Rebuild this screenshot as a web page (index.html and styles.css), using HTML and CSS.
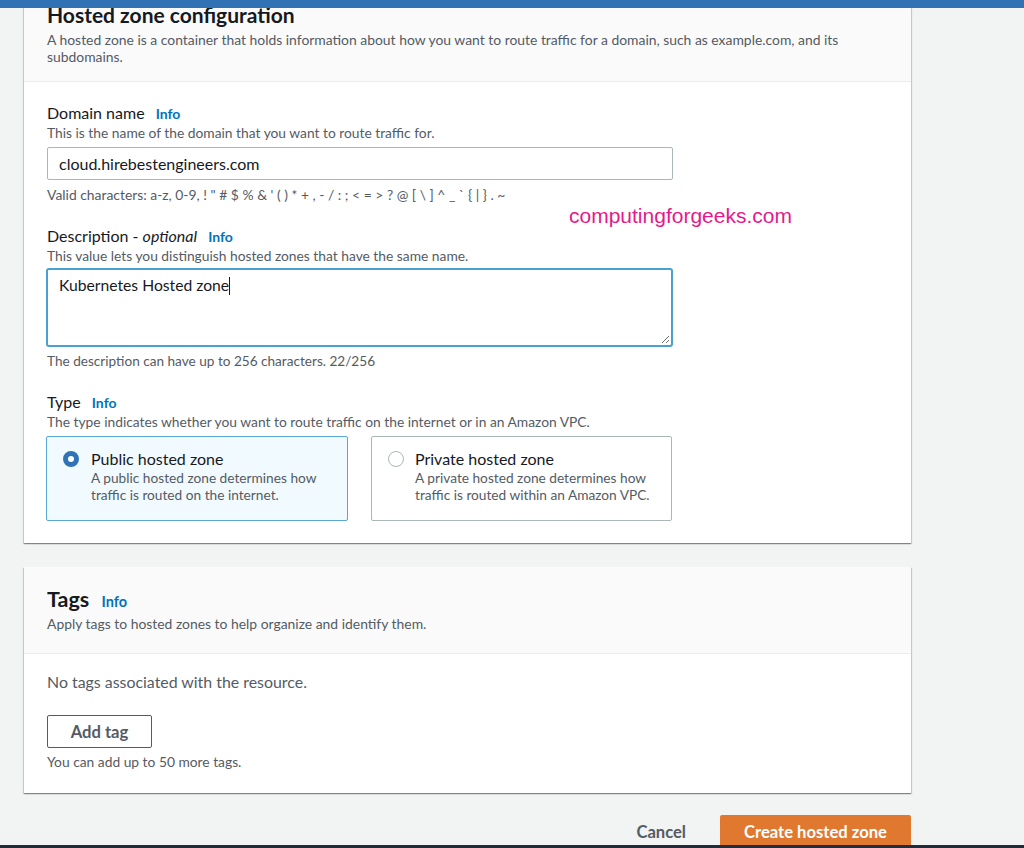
FILE: index.html
```html
<!DOCTYPE html>
<html>
<head>
<meta charset="utf-8">
<link rel="stylesheet" href="styles.css">
</head>
<body>
<div class="topbar"></div>
<main class="page">
  <section class="card">
    <header class="card-head">
      <h2 class="title">Hosted zone configuration</h2>
      <p class="head-desc">A hosted zone is a container that holds information about how you want to route traffic for a domain, such as example.com, and its subdomains.</p>
    </header>
    <div class="card-body">
      <div class="field">
        <div class="label">Domain name <a class="info">Info</a></div>
        <div class="hint">This is the name of the domain that you want to route traffic for.</div>
        <div class="input">cloud.hirebestengineers.com</div>
        <div class="constraint">Valid characters: a-z, 0-9, ! " # $ % &amp; ' ( ) * + , - / : ; &lt; = &gt; ? @ [ \ ] ^ _ ` { | } . ~</div>
      </div>
      <div class="watermark">computingforgeeks.com</div>
      <div class="field field-desc">
        <div class="label">Description - <i>optional</i> <a class="info">Info</a></div>
        <div class="hint">This value lets you distinguish hosted zones that have the same name.</div>
        <div class="textarea"><span class="ta-text">Kubernetes Hosted zone</span><span class="caret"></span>
          <svg class="grip" width="9" height="9" viewBox="0 0 9 9"><path d="M8 1L1 8M8 5L5 8" stroke="#687078" stroke-width="1"/></svg>
        </div>
        <div class="constraint constraint-count">The description can have up to 256 characters. 22/256</div>
      </div>
      <div class="field field-type">
        <div class="label">Type <a class="info">Info</a></div>
        <div class="hint">The type indicates whether you want to route traffic on the internet or in an Amazon VPC.</div>
        <div class="tiles">
          <div class="tile tile-on">
            <span class="radio radio-on"></span>
            <div>
              <div class="tile-title">Public hosted zone</div>
              <div class="tile-desc">A public hosted zone determines how traffic is routed on the internet.</div>
            </div>
          </div>
          <div class="tile tile-off">
            <span class="radio"></span>
            <div>
              <div class="tile-title">Private hosted zone</div>
              <div class="tile-desc">A private hosted zone determines how traffic is routed within an Amazon VPC.</div>
            </div>
          </div>
        </div>
      </div>
    </div>
  </section>

  <section class="card card-tags">
    <header class="card-head tags-head">
      <h2 class="title-tags">Tags <a class="info info-lg">Info</a></h2>
      <p class="head-desc">Apply tags to hosted zones to help organize and identify them.</p>
    </header>
    <div class="card-body tags-body">
      <div class="empty">No tags associated with the resource.</div>
      <button class="btn">Add tag</button>
      <div class="tags-note">You can add up to 50 more tags.</div>
    </div>
  </section>

  <div class="actions">
    <a class="cancel">Cancel</a>
    <button class="primary">Create hosted zone</button>
  </div>
</main>
<div class="bottombar"></div>
</body>
</html>
```

FILE: styles.css
```css
* { box-sizing: border-box; }
html, body { margin: 0; padding: 0; }
body {
  width: 1024px;
  height: 848px;
  overflow: hidden;
  background: #f2f3f3;
  font-family: Lato, "Liberation Sans", sans-serif;
  color: #16191f;
  position: relative;
}
.topbar { height: 8px; background: #3072b4; position: relative; z-index: 2; }
.page { padding-left: 24px; width: 911px; }
.card {
  background: #fff;
  box-shadow: 0 1px 1px 0 rgba(0,28,36,.3), 1px 1px 1px 0 rgba(0,28,36,.15), -1px 1px 1px 0 rgba(0,28,36,.15);
  position: relative;
}
.card-head {
  background: #fafafa;
  border-bottom: 1px solid #eaeded;
  padding: 0 23px;
  height: 78px;
}
.title {
  margin: -4px 0 0 0;
  font-size: 21px;
  line-height: 22px;
  font-weight: 700;
}
.head-desc {
  margin: 5px 0 0 0;
  font-size: 13.9px;
  line-height: 17px;
  color: #545b64;
  max-width: 810px;
}
.card-body { padding: 21px 23px 22px 23px; position: relative; }
.label { font-size: 16px; line-height: 20px; }
.label i { font-style: italic; }
.info { color: #0073bb; font-weight: 700; font-size: 14px; margin-left: 7px; }
.hint { font-size: 13.8px; line-height: 18px; color: #545b64; }
.input {
  margin-top: 5px;
  width: 626px;
  height: 33px;
  border: 1px solid #aab7b8;
  border-radius: 2px;
  padding: 0 11px;
  font-size: 16px;
  line-height: 31px;
}
.constraint { font-size: 13.9px; line-height: 18px; color: #545b64; margin-top: 6px; }
.watermark {
  position: absolute;
  left: 545px;
  top: 122px;
  font-family: "Liberation Sans", Arial, sans-serif;
  font-size: 21px;
  line-height: 24px;
  color: #e5198c;
}
.field-desc { margin-top: 22px; }
.textarea {
  margin-top: 3px;
  margin-left: -1px;
  width: 627px;
  height: 79px;
  border: 2px solid #4aa0cf;
  border-radius: 3px;
  padding: 5px 11px;
  font-size: 15.7px;
  line-height: 20px;
  position: relative;
}
.caret { display: inline-block; width: 1px; height: 18px; background: #16191f; vertical-align: -4px; }
.grip { position: absolute; right: 1px; bottom: 1px; }
.field-desc .constraint-count { margin-top: 5px; font-size: 13.6px; }
.field-type { margin-top: 22px; }
.tiles { display: flex; gap: 23px; margin-top: 5px; margin-left: -1px; }
.tile {
  width: 302px;
  height: 85px;
  border: 1px solid #aab7b8;
  border-radius: 2px;
  padding: 12px 10px 0 16px;
  display: flex;
  gap: 12px;
}
.tile-off { width: 301px; gap: 11px; }
.tile-on { background: #f1faff; border-color: #5aa7d6; }
.radio {
  flex: none;
  width: 16px; height: 16px;
  border-radius: 50%;
  border: 1px solid #aab7b8;
  background: #fff;
  margin-top: 2px;
}
.radio-on { border: 5px solid #2f73b6; }
.tile-title { font-size: 16px; line-height: 20px; }
.tile-desc { font-size: 13.7px; line-height: 17px; color: #545b64; }

.card-tags { margin-top: 24px; }
.tags-head { height: 87px; padding-top: 19px; }
.title-tags { margin: 0; font-size: 21.5px; line-height: 26px; font-weight: 700; }
.info-lg { margin-left: 7px; font-size: 14.5px; }
.tags-head .head-desc { margin-top: 0; line-height: 18px; }
.tags-body { padding: 18px 23px 22px 23px; }
.empty { font-size: 15.9px; line-height: 20px; color: #545b64; }
.btn {
  margin-top: 23px;
  display: block;
  width: 105px;
  height: 33px;
  background: #fff;
  border: 1px solid #545b64;
  border-radius: 2px;
  font-family: inherit;
  font-size: 16.6px;
  font-weight: 700;
  color: #545b64;
  padding: 0;
}
.tags-note { font-size: 13.8px; line-height: 18px; color: #545b64; margin-top: 5px; }

.actions {
  display: flex;
  justify-content: flex-end;
  align-items: center;
  gap: 34px;
  margin-top: 22px;
}
.cancel { font-size: 16.6px; font-weight: 700; color: #545b64; }
.primary {
  width: 191px;
  height: 34px;
  background: #e0792f;
  border: none;
  border-radius: 2px 2px 0 0;
  color: #fff;
  font-family: inherit;
  font-size: 16.6px;
  font-weight: 700;
  padding: 0;
}
.bottombar { position: absolute; left: 0; right: 0; bottom: 0; height: 3px; background: #232b3a; }
```
